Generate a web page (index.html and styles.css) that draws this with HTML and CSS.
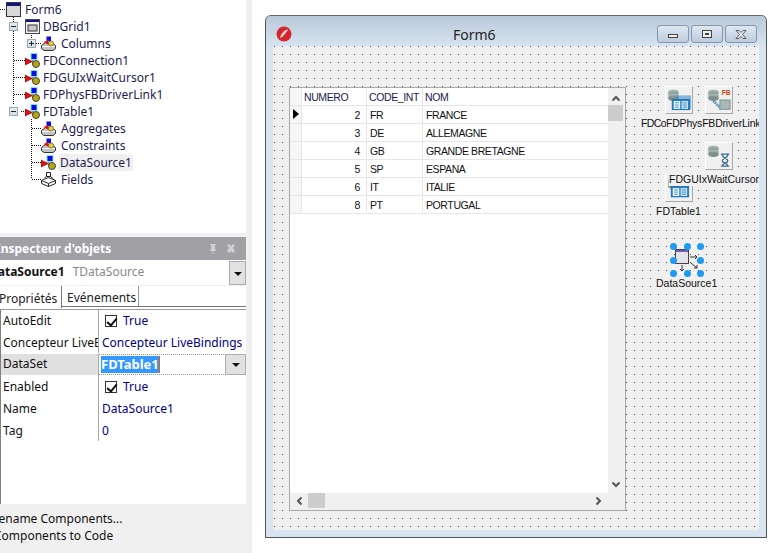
FILE: index.html
```html
<!DOCTYPE html>
<html lang="fr">
<head>
<meta charset="utf-8">
<title>Form6</title>
<link rel="stylesheet" href="styles.css">
</head>
<body>
<svg class="defs" width="0" height="0" aria-hidden="true">
  <symbol id="i-comp" viewBox="0 0 15 15">
    <path d="M8 5v5M7 10h4" stroke="#333" stroke-width="1" stroke-dasharray="1 1" fill="none"/>
    <rect x="6" y="0.500" width="6" height="6" fill="#0a0ae6" stroke="#7fe8e0" stroke-width="1"/>
    <path d="M0 5l7.500 3.500L0 12z" fill="#e01010" stroke="#700" stroke-width=".6"/>
    <circle cx="11" cy="11" r="3.500" fill="#b5a510" stroke="#444" stroke-width="1"/>
  </symbol>
  <symbol id="i-coll" viewBox="0 0 15 15">
    <path d="M.5 9.500l4-3h6l4 3v3l-2.500 2h-9l-2.500-2z" fill="#c4c4c4" stroke="#333"/>
    <path d="M1 10.500h13" stroke="#fff"/>
    <rect x="5.500" y="0.500" width="4.500" height="4.500" fill="#0a0ae6"/>
    <path d="M2.500 6l5-2v5z" fill="#e01010"/>
    <circle cx="10" cy="7.500" r="2.600" fill="#e8d020" stroke="#555" stroke-width=".7"/>
  </symbol>
  <symbol id="i-fields" viewBox="0 0 15 15">
    <path d="M.5 8.500l7-3 7 3v3l-7 3-7-3zM.5 8.500l7 3 7-3M7.500 11.500v3" fill="#fff" stroke="#222"/>
    <path d="M5.500.5h4v4h-4zM3.500 6l2-1.500M9.500 4.500l3 2.500" fill="#fff" stroke="#222"/>
  </symbol>
  <symbol id="i-cube" viewBox="0 0 28 28">
    <ellipse cx="8" cy="5.500" rx="5.500" ry="2.500" fill="#9fb0ac"/>
    <rect x="2.500" y="5.500" width="11" height="7" fill="#8ea29d"/>
    <ellipse cx="8" cy="12.500" rx="5.500" ry="2.500" fill="#7d918c"/>
    <path d="M3 8.500h10" stroke="#b8c6c2"/>
  </symbol>
  <symbol id="i-table" viewBox="0 0 26 16">
    <rect x="0.500" y="0.500" width="25" height="15" fill="#2a86c8" stroke="#17629c"/>
    <rect x="3" y="3" width="9" height="11" fill="#eaf4fb"/>
    <rect x="14" y="3" width="9" height="11" fill="#cfe3f1"/>
    <path d="M5 5.500h5M5 8.500h5M5 11.500h5M15.500 5.500h6M15.500 8.500h6M15.500 11.500h6" stroke="#2a86c8" stroke-width="1.200"/>
  </symbol>
</svg>

<div class="left">
  <div class="tree">
    <svg class="tree-lines" width="60" height="190" aria-hidden="true">
      <path d="M0 9.500h6M13.500 17v87M14 26.500h4M14 60.500h11M14 77.500h11M14 94.500h11M21 111.500h4M31.500 33v6M36 43.500h5M31.500 119v60M32 128.500h9M32 145.500h9M32 162.500h9M32 179.500h9" stroke="#111" stroke-dasharray="1 1" fill="none"/>
    </svg>
    <div class="node l0"><svg class="ico" viewBox="0 0 15 15"><rect x=".5" y=".5" width="14" height="14" fill="#d8d8d8" stroke="#334"/><rect x="1" y="1" width="13" height="3" fill="#14147a"/></svg><span>Form6</span></div>
    <div class="node l1"><span class="box minus"></span><svg class="ico" viewBox="0 0 15 15"><rect x=".5" y=".5" width="14" height="14" fill="#f4f4f4" stroke="#445"/><rect x="1" y="1" width="13" height="2" fill="#14147a"/><rect x="3" y="6" width="9" height="6" fill="#c8c8c8" stroke="#333"/></svg><span>DBGrid1</span></div>
    <div class="node l2"><span class="box plus"></span><svg class="ico"><use href="#i-coll"/></svg><span>Columns</span></div>
    <div class="node l1"><svg class="ico"><use href="#i-comp"/></svg><span>FDConnection1</span></div>
    <div class="node l1"><svg class="ico"><use href="#i-comp"/></svg><span>FDGUIxWaitCursor1</span></div>
    <div class="node l1"><svg class="ico"><use href="#i-comp"/></svg><span>FDPhysFBDriverLink1</span></div>
    <div class="node l1"><span class="box minus"></span><svg class="ico"><use href="#i-comp"/></svg><span>FDTable1</span></div>
    <div class="node l2"><svg class="ico"><use href="#i-coll"/></svg><span>Aggregates</span></div>
    <div class="node l2"><svg class="ico"><use href="#i-coll"/></svg><span>Constraints</span></div>
    <div class="node l2"><svg class="ico"><use href="#i-comp"/></svg><span class="sel">DataSource1</span></div>
    <div class="node l2"><svg class="ico"><use href="#i-fields"/></svg><span>Fields</span></div>
  </div>

  <div class="inspector">
    <div class="insp-title">
      <span class="insp-name">Inspecteur d'objets</span>
      <svg class="pin" width="30" height="12" viewBox="0 0 30 12" aria-hidden="true">
        <path d="M2 1h6v1H7v4l1 1v1H5.500v3h-1V8H2V7l1-1V2H2z" fill="#d0d0d4"/>
        <path d="M19 2l2-1 2 2 2-2 2 1-2 3 2 3-2 2-2-2-2 2-2-2 2-3z" fill="#d0d0d4"/>
      </svg>
    </div>
    <div class="insp-select">
      <span class="obj-name">DataSource1</span><span class="obj-type">TDataSource</span>
      <span class="drop sel-drop"></span>
    </div>
    <div class="tabs">
      <span class="tab active">Propriétés</span>
      <span class="tab">Evénements</span>
    </div>
    <div class="props">
      <div class="prop"><span class="k">AutoEdit</span><span class="v"><span class="check"></span>True</span></div>
      <div class="prop"><span class="k">Concepteur LiveBindings</span><span class="v">Concepteur LiveBindings</span></div>
      <div class="prop current"><span class="k">DataSet</span><span class="v edit"><span class="selected">FDTable1</span><span class="drop"></span></span></div>
      <div class="prop"><span class="k">Enabled</span><span class="v"><span class="check"></span>True</span></div>
      <div class="prop"><span class="k">Name</span><span class="v">DataSource1</span></div>
      <div class="prop"><span class="k">Tag</span><span class="v">0</span></div>
    </div>
  </div>

  <div class="verbs">
    <div>Rename Components...</div>
    <div class="second">Components to Code</div>
  </div>
</div>

<div class="main">
  <div class="window">
    <div class="titlebar">
      <svg class="app" width="16" height="16" viewBox="0 0 16 16" aria-hidden="true">
        <circle cx="8" cy="8" r="7.500" fill="#d8252c"/>
        <path d="M4 12C5 8 8 4 12 3.500 11 5 11 6 9.500 6.500 10 7.500 9 8.500 8 8.500 8 10 6 11 4 12z" fill="#f6dcdc"/>
      </svg>
      <span class="caption">Form6</span>
      <div class="buttons">
        <span class="wbtn"><span class="g-min"></span></span>
        <span class="wbtn"><span class="g-max"></span></span>
        <span class="wbtn"><svg width="14" height="11" viewBox="0 0 14 11" aria-hidden="true"><path d="M2 1.500h3l2 2 2-2h3l-3.500 4 3.500 4H9l-2-2-2 2H2l3.500-4z" fill="#e9ecef" stroke="#555c66"/></svg></span>
      </div>
    </div>
    <div class="canvas">
      <div class="dbgrid">
        <div class="g-body">
          <div class="g-row head"><span class="ind"></span><span class="c1 left-a">NUMERO</span><span class="c2">CODE_INT</span><span class="c3">NOM</span></div>
          <div class="g-row"><span class="ind"><i class="ptr"></i></span><span class="c1">2</span><span class="c2">FR</span><span class="c3">FRANCE</span></div>
          <div class="g-row"><span class="ind"></span><span class="c1">3</span><span class="c2">DE</span><span class="c3">ALLEMAGNE</span></div>
          <div class="g-row"><span class="ind"></span><span class="c1">4</span><span class="c2">GB</span><span class="c3">GRANDE BRETAGNE</span></div>
          <div class="g-row"><span class="ind"></span><span class="c1">5</span><span class="c2">SP</span><span class="c3">ESPANA</span></div>
          <div class="g-row"><span class="ind"></span><span class="c1">6</span><span class="c2">IT</span><span class="c3">ITALIE</span></div>
          <div class="g-row"><span class="ind"></span><span class="c1">8</span><span class="c2">PT</span><span class="c3">PORTUGAL</span></div>
        </div>
        <div class="vscroll">
          <svg width="10" height="7" viewBox="0 0 10 7" aria-hidden="true"><path d="M1.500 5.500L5 2l3.500 3.500" stroke="#555" stroke-width="2" fill="none"/></svg>
          <span class="vthumb"></span>
          <svg class="bottom-arrow" width="10" height="7" viewBox="0 0 10 7" aria-hidden="true"><path d="M1.500 1.500L5 5l3.500-3.500" stroke="#555" stroke-width="2" fill="none"/></svg>
        </div>
        <div class="hscroll">
          <svg width="7" height="10" viewBox="0 0 7 10" aria-hidden="true"><path d="M5.500 1.500L2 5l3.500 3.500" stroke="#555" stroke-width="2" fill="none"/></svg>
          <span class="hthumb"></span>
          <svg class="right-arrow" width="7" height="10" viewBox="0 0 7 10" aria-hidden="true"><path d="M1.500 1.500L5 5 1.500 8.500" stroke="#555" stroke-width="2" fill="none"/></svg>
        </div>
        <span class="corner"></span>
      </div>

      <div class="comp at-conn"><svg width="26" height="26" viewBox="0 0 28 28"><use href="#i-cube"/><rect x="11" y="9" width="16" height="15" fill="#2a86c8" opacity=".55"/><svg x="6" y="12" width="20" height="14" viewBox="0 0 26 16"><use href="#i-table"/></svg></svg></div>
      <div class="comp at-link"><svg width="26" height="26" viewBox="0 0 28 28"><use href="#i-cube"/><path d="M8 15l9 9" stroke="#3f86b8" stroke-width="3" stroke-dasharray="1.500 1"/><rect x="15" y="14" width="11" height="10" fill="#a8b8b8" stroke="#7d8f8f"/><text x="17" y="9" class="fb">FB</text></svg></div>
      <div class="comp at-wait"><svg width="26" height="26" viewBox="0 0 28 28"><use href="#i-cube"/><path d="M16 12h9M16 25h9M17.500 12.500c0 4 6 4 6 6.500s-6 2.500-6 6M23.500 12.500c0 4-6 4-6 6.500s6 2.500 6 6" stroke="#3a6f98" stroke-width="1.400" fill="#f2d9a0"/></svg></div>
      <div class="comp at-table"><svg width="26" height="26" viewBox="0 0 28 28"><use href="#i-cube"/><svg x="5" y="11" width="20" height="14" viewBox="0 0 26 16"><use href="#i-table"/></svg></svg></div>

      <span class="lbl l-conn">FDConnection1</span>
      <span class="lbl l-link">FDPhysFBDriverLink1</span>
      <span class="lbl l-table">FDTable1</span>
      <span class="lbl l-wait">FDGUIxWaitCursor1</span>

      <div class="dsource">
        <svg class="ds-ico" width="28" height="28" viewBox="0 0 28 28" aria-hidden="true">
          <rect x="2.500" y="3.500" width="13" height="14" fill="#e4e4e8" stroke="#444"/>
          <rect x="3" y="4" width="12" height="2" fill="#6c5fb0"/>
          <path d="M17 11h7M22 9l2 2-2 2M9 19v6M7 23l2 2 2-2M18 17l6 5M24 19v3h-3" stroke="#333" fill="none"/>
        </svg>
        <i class="h h1"></i><i class="h h2"></i><i class="h h3"></i><i class="h h4"></i><i class="h h5"></i><i class="h h6"></i><i class="h h7"></i><i class="h h8"></i>
      </div>
      <span class="lbl l-ds">DataSource1</span>
    </div>
  </div>
</div>
</body>
</html>
```
FILE: styles.css
```css
* { box-sizing: border-box; }
html, body { margin: 0; height: 100%; }
body {
  width: 782px; height: 553px; overflow: hidden; background: #fff; display: flex;
  font-family: "Noto Sans", "Open Sans", sans-serif; color: #101030;
}
.defs { position: absolute; }

/* left column */
.left { width: 252px; height: 553px; flex: none; background: #f0f0f0; display: flex; flex-direction: column; overflow: hidden; }
.tree { position: relative; width: 246px; height: 233px; background: #fff; padding-top: 1px; font-size: 12px; flex: none; }
.tree-lines { position: absolute; left: 0; top: 0; }
.node { height: 17px; display: flex; align-items: center; position: relative; white-space: nowrap; color: #1c1c50; }
.node span:not(.box) { padding: 0 1px; line-height: 17px; }
.l0 { padding-left: 6px; }
.l0 .ico { margin-right: 3px; }
.l1 { padding-left: 25px; }
.l2 { padding-left: 41px; }
.l2 .ico { margin-right: 4px; }
.ico { width: 15px; height: 15px; margin-right: 2px; flex: none; }
.node .sel { background: #f0f0f0; padding: 0 5px 0 2px; margin-left: -1px; }
.box { position: absolute; width: 9px; height: 9px; background: #ececec linear-gradient(#e4ecf4, #d6dde4); border: 1px solid #9aa; }
.box::before { content: ""; position: absolute; left: 1px; top: 3px; width: 5px; height: 1px; background: #223; }
.l1 .box { left: 9px; top: 4px; }
.l2 .box { left: 27px; top: 4px; }
.plus::after { content: ""; position: absolute; left: 3px; top: 1px; width: 1px; height: 5px; background: #223; }

/* inspector */
.inspector { margin-top: 4px; width: 246px; height: 267px; background: #fff; flex: none; font-size: 12px; color: #111; }
.insp-title { height: 23px; background: #a0a0a5; display: flex; align-items: center; justify-content: space-between; padding-right: 8px; }
.insp-name { margin-left: -4px; color: #fff; font-weight: 700; white-space: nowrap; }
.insp-select { height: 25px; padding-bottom: 2px; display: flex; align-items: center; position: relative; white-space: nowrap; }
.obj-name { margin-left: -11px; font-weight: 700; color: #111; }
.obj-type { margin-left: 8px; color: #888; }
.drop { position: absolute; right: 0; width: 21px; height: 21px; background: #e1e1e1; border: 1px solid #adadad; }
.drop::after { content: ""; position: absolute; left: 6px; top: 8px; border: 4px solid transparent; border-top: 4px solid #111; border-bottom: 0; }
.sel-drop { top: 1px; width: 17px; height: 24px; }
.sel-drop::after { left: 4px; top: 10px; }
.tabs { height: 23px; display: flex; align-items: flex-end; position: relative; background: linear-gradient(#f0f0f0 0 1px, #fff 0); }
.tabs::after { content: ""; position: absolute; left: 62px; right: 0; bottom: 1px; height: 1px; background: #777; }
.tab { display: flex; align-items: center; white-space: nowrap; color: #222; padding-top: 3px; }
.tab.active { width: 62px; height: 22px; text-indent: -1px; border-right: 1px solid #777; }
.tab:not(.active) { padding-left: 5px; padding-right: 2px; margin-bottom: 2px; height: 20px; padding-top: 3px; border-right: 1px solid #999; }
.props { margin-top: 1px; height: 195px; border-top: 1px solid #9a9a9a; border-left: 1px solid #808080; }
.prop { height: 22px; display: flex; position: relative; line-height: 24px; white-space: nowrap; }
.prop:first-child { height: 21px; line-height: 21px; }
.prop .k { width: 98px; flex: none; overflow: hidden; padding-left: 2px; border-right: 1px solid #a8a8a8; }
.prop .v { flex: 1; padding-left: 3px; padding-top: 2px; color: #000080; display: flex; align-items: center; position: relative; }
.prop:first-child .v { padding-top: 0; }
.current .k { background: #e0e0e0; height: 21px; margin-top: 1px; line-height: 20px; }
.prop .edit { border-top: 1px dotted #999; border-bottom: 1px dotted #999; height: 21px; margin-top: 1px; padding: 0 0 0 2px; }
.selected { background: #3399ff; color: #fff; font-weight: 700; font-size: 13px; border-right: 1px solid #e06000; line-height: 17px; height: 17px; }
.edit .drop { top: -1px; }
.check { width: 12px; height: 12px; margin: 0 6px 0 3px; border: 1px solid #333; background: #fff; position: relative; flex: none; }
.check::after { content: ""; position: absolute; left: 3px; top: 0; width: 4px; height: 8px; border: solid #111; border-width: 0 2px 2px 0; transform: rotate(40deg); }

.verbs { padding-top: 6px; margin-left: -9px; font-size: 12px; color: #111; line-height: 17px; white-space: nowrap; }
.verbs .second { margin-left: 3px; }

/* form window */
.main { flex: 1; padding: 15px 0 0 13px; }
.window { width: 502px; height: 523px; border: 1px solid #50525a; border-top-color: #666; border-radius: 6px 6px 0 0; background: #d8e4f0; display: flex; flex-direction: column; padding: 0 7px 7px 7px; }
.titlebar { height: 30px; margin: 0 -7px; padding: 6px 9px 0 10px; flex: none; display: flex; align-items: center; position: relative; background: linear-gradient(#b9c8d8, #d7e4f1); border-radius: 5px 5px 0 0; }
.app { flex: none; }
.caption { position: absolute; left: 187px; top: 9px; font-size: 14px; line-height: 19px; color: #222; }
.buttons { margin-left: auto; display: flex; gap: 2px; }
.wbtn { width: 32px; height: 18px; border: 1px solid #8796ae; border-radius: 3px; background: linear-gradient(#dfe8f1, #bccbdc); display: flex; align-items: center; justify-content: center; }
.g-min { width: 10px; height: 4px; margin-top: 4px; border: 1px solid #444; background: #eee; }
.g-max { width: 10px; height: 8px; border: 1px solid #444; background: #eee; position: relative; }
.g-max::after { content: ""; position: absolute; left: 2px; top: 2px; width: 4px; height: 2px; background: #444; }

.canvas { flex: 1; position: relative; background-color: #f0f0f0; background-image: url("data:image/svg+xml,%3Csvg xmlns='http://www.w3.org/2000/svg' width='8' height='8' shape-rendering='crispEdges'%3E%3Crect width='1' height='1' fill='%23444'/%3E%3C/svg%3E"); background-size: 8px 8px; background-position: 1px 0; font-family: "Liberation Sans", sans-serif; font-size: 10.5px; }

/* grid */
.dbgrid { position: absolute; left: 16px; top: 41px; width: 337px; height: 424px; border: 1px solid #a8a8a8; background: #f0f0f0; display: grid; grid-template-columns: 1fr 17px; grid-template-rows: 1fr 15px; padding-bottom: 2px; color: #111; letter-spacing: -.4px; }
.g-body { background: #fff; }
.g-row { height: 18px; display: flex; line-height: 19px; border-bottom: 1px solid #e6e6e6; }
.g-row > span { height: 17px; white-space: nowrap; border-right: 1px solid #e6e6e6; padding: 0 2px; }
.g-row .ind { width: 12px; background: #f6f6f6; position: relative; }
.g-row .c1 { width: 65px; text-align: right; padding-right: 6px; }
.g-row .c2 { width: 56px; padding-left: 3px; }
.g-row .c3 { flex: 1; border-right: 0; padding-left: 3px; }
.head { color: #1a1a50; }
.g-row.head .c1, .g-row.head .c2, .g-row.head .c3 { padding-left: 2px; }
.head .left-a { text-align: left; }
.ptr { position: absolute; left: 3px; top: 3px; border: 5px solid transparent; border-left: 6px solid #000; border-right: 0; }
.vscroll { grid-row: 1; grid-column: 2; display: flex; flex-direction: column; align-items: center; padding: 7px 2px 0 0; }
.vthumb { width: 15px; height: 16px; background: #cdcdcd; margin-top: 3px; flex: none; }
.bottom-arrow { margin-top: auto; margin-bottom: 5px; }
.hscroll { grid-row: 2; grid-column: 1; display: flex; align-items: center; padding-left: 6px; }
.hthumb { width: 17px; height: 15px; background: #cdcdcd; margin-left: 5px; }
.right-arrow { margin-left: auto; margin-right: 6px; }
.corner { grid-row: 2; grid-column: 2; }

/* designer components */
.comp { position: absolute; width: 28px; height: 28px; border: 1px solid #fff; border-right-color: #a8a8a8; border-bottom-color: #a8a8a8; background: #f0f0f0; }
.comp svg { display: block; }
.at-conn { left: 392px; top: 40px; }
.at-link { left: 432px; top: 40px; }
.at-wait { left: 432px; top: 96px; }
.at-table { left: 392px; top: 128px; }
.fb { font: 700 7px "Liberation Sans", sans-serif; fill: #d0440c; }
.lbl { position: absolute; line-height: 13px; white-space: nowrap; color: #111; background: #f0f0f0; overflow: hidden; }
.l-conn { left: 368px; top: 71px; width: 25px; letter-spacing: -.6px; }
.l-link { left: 393px; top: 71px; width: 93px; letter-spacing: -.2px; }
.l-table { left: 383px; top: 159px; }
.l-wait { left: 396px; top: 127px; width: 90px; }
.l-ds { left: 383px; top: 231px; }
.dsource { position: absolute; left: 400px; top: 200px; width: 27px; height: 27px; border: 1px solid #fff; }
.ds-ico { position: absolute; left: -1px; top: -1px; }
.h { position: absolute; width: 7px; height: 7px; border-radius: 50%; background: #1e9bf0; }
.h1 { left: -4px; top: -4px; } .h2 { left: 10px; top: -4px; } .h3 { left: 23px; top: -4px; }
.h4 { left: -4px; top: 10px; } .h5 { left: 23px; top: 10px; }
.h6 { left: -4px; top: 23px; } .h7 { left: 10px; top: 23px; } .h8 { left: 23px; top: 23px; }
```
